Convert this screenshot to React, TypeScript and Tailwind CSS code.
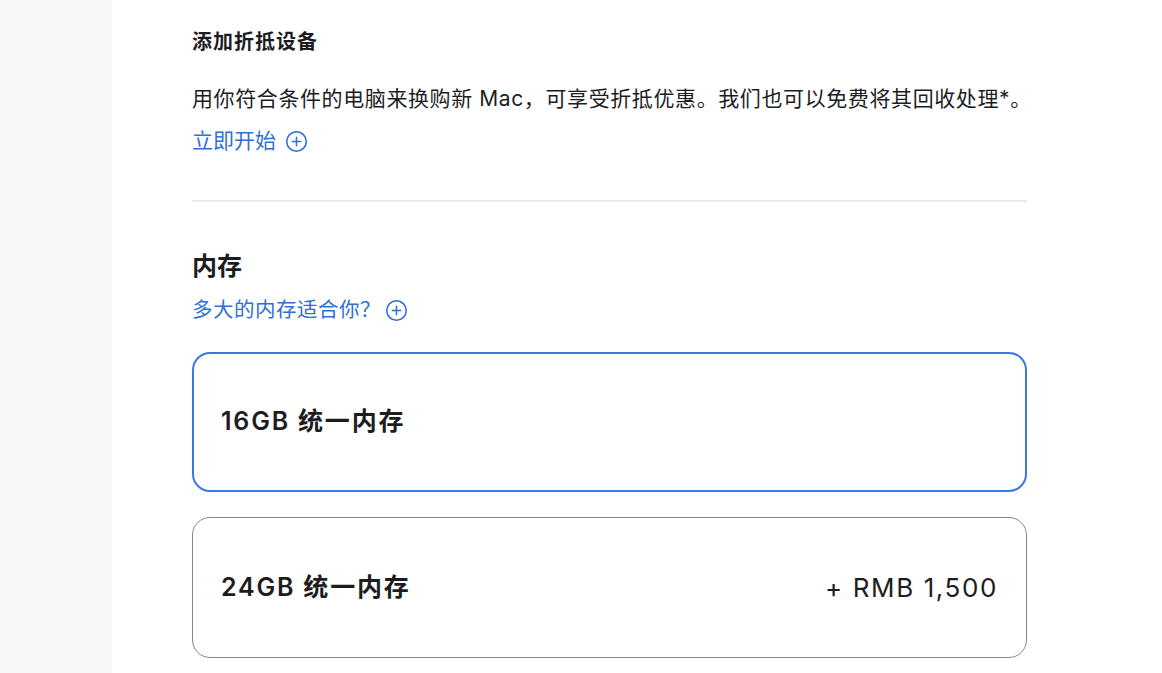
import React from "react";

const PlusCircle = () => (
  <svg width="23" height="23" viewBox="0 0 24 24" fill="none" stroke="currentColor" strokeWidth="1.6" strokeLinecap="round" className="shrink-0">
    <circle cx="12" cy="12" r="10.2" />
    <path d="M12 7.6v8.8M7.6 12h8.8" />
  </svg>
);

export default function App() {
  const font = { fontFamily: 'Inter, "Noto Sans CJK SC", sans-serif' };
  return (
    <div className="flex min-h-[673px] w-full bg-white text-[#1d1d1f]" style={font}>
      <div className="w-[112px] shrink-0 bg-[#f8f8f8]" />
      <div className="pl-[80px] w-[915px]">
        <div className="w-[835px]">
          <div className="pt-[28px] text-[20px] leading-[28px] font-semibold tracking-[1px]">添加折抵设备</div>
          <p className="mt-[29px] text-[21px] leading-[28px] tracking-[0.6px] whitespace-nowrap">
            用你符合条件的电脑来换购新 Mac，可享受折抵优惠。我们也可以免费将其回收处理*。
          </p>
          <a className="mt-[14px] flex items-center gap-[9px] text-[21px] leading-[28px] text-[#2f6fd6]">
            <span>立即开始</span>
            <PlusCircle />
          </a>
          <div className="mt-[45px] h-[2px] bg-[#e8e8ed]" />
          <div className="mt-[48px] text-[25px] leading-[32px] font-semibold">内存</div>
          <a className="mt-[14px] flex items-center gap-[4px] text-[20.5px] leading-[28px] text-[#2f6fd6]">
            <span className="tracking-[0.5px]">多大的内存适合你？</span>
            <PlusCircle />
          </a>
          <div className="mt-[28px] flex flex-col gap-[25px]">
            <div className="h-[140px] rounded-[18px] border-2 border-[#3a77e3] px-[27px] flex items-center justify-between">
              <span className="text-[25px] font-semibold tracking-[1.8px]">16GB 统一内存</span>
            </div>
            <div className="h-[141px] rounded-[18px] border border-[#86868b] px-[28px] flex items-center justify-between">
              <span className="text-[25px] font-semibold tracking-[1.8px]">24GB 统一内存</span>
              <span className="text-[26px] tracking-[1.6px]">+ RMB 1,500</span>
            </div>
          </div>
        </div>
      </div>
    </div>
  );
}
